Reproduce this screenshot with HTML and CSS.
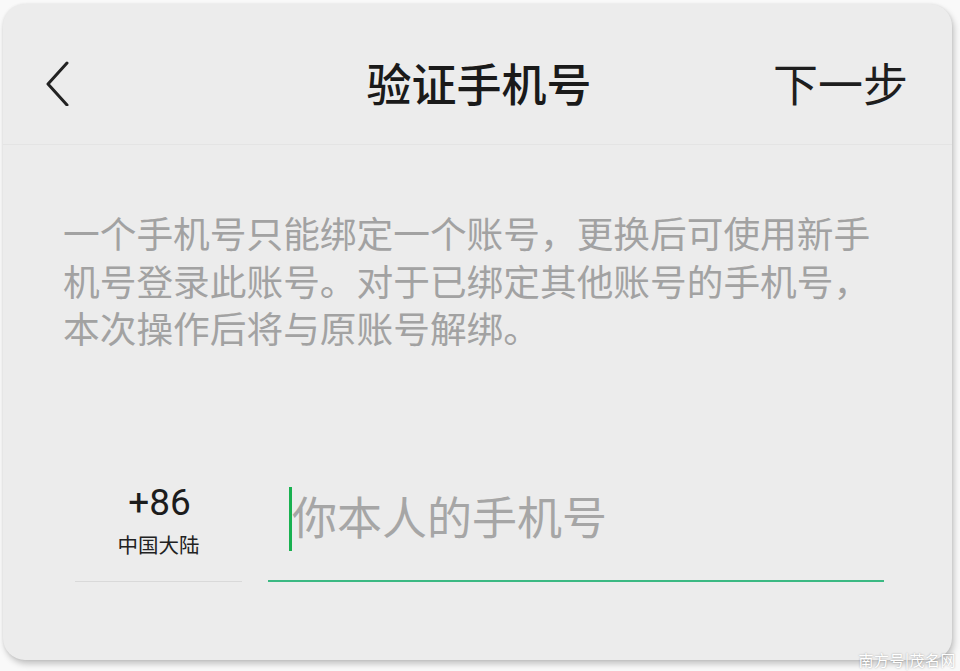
FILE: index.html
```html
<!DOCTYPE html>
<html lang="zh-CN">
<head>
    <meta charset="UTF-8">
    <meta name="viewport" content="width=device-width, initial-scale=1.0">
    <title>验证手机号</title>
    <link rel="stylesheet" href="styles.css">
</head>
<body>
    <div class="card">
        <!-- Top bar -->
        <div class="header">
            <a class="back" href="#">
                <svg width="26" height="46" viewBox="0 0 26 46">
                    <path d="M21 3 L2 24 L21 45" fill="none" stroke="#222" stroke-width="3" stroke-linecap="round" stroke-linejoin="round"/>
                </svg>
            </a>
            <h1 class="title">验证手机号</h1>
            <a class="next" href="#">下一步</a>
        </div>

        <!-- Notice -->
        <p class="notice">一个手机号只能绑定一个账号，更换后可使用新手<br>机号登录此账号。对于已绑定其他账号的手机号，<br>本次操作后将与原账号解绑。</p>

        <!-- Phone number -->
        <div class="phone-row">
            <div class="region">
                <div class="code">+86</div>
                <div class="region-name">中国大陆</div>
            </div>
            <div class="phone-input">
                <span class="cursor"></span>
                <input type="tel" placeholder="你本人的手机号">
            </div>
        </div>
    </div>

    <div class="watermark">南方号|茂名网</div>
</body>
</html>
```

FILE: styles.css
```css
* {
    box-sizing: border-box;
    margin: 0;
    padding: 0;
}
body {
    font-family: "Noto Sans CJK SC", "Noto Sans", sans-serif;
    background-color: #f9f9f9;
    width: 960px;
    height: 671px;
    overflow: hidden;
    position: relative;
}
.card {
    margin: 4px 8px 0 3px;
    height: 656px;
    background-color: #ececec;
    border-radius: 22px;
    box-shadow: 2px 4px 6px rgba(0, 0, 0, 0.22), 0 0 3px rgba(0, 0, 0, 0.08);
}
.header {
    height: 141px;
    padding: 17px 44px 0 43px;
    display: grid;
    grid-template-columns: 1fr auto 1fr;
    align-items: center;
    border-bottom: 1px solid #e4e4e4;
}
.back {
    display: flex;
    align-items: center;
}
.title {
    font-size: 45px;
    font-weight: 500;
    color: #1a1a1a;
    line-height: 1;
    padding-left: 4px;
}
.next {
    justify-self: end;
    font-size: 45px;
    color: #1e1e1e;
    text-decoration: none;
    line-height: 1;
}
.notice {
    margin: 64px 40px 0 60px;
    font-size: 36.7px;
    line-height: 47.5px;
    color: #a2a2a2;
    white-space: nowrap;
}
.phone-row {
    display: flex;
    align-items: flex-end;
    margin: 131px 68px 0 72px;
    gap: 26px;
}
.region {
    width: 167px;
    text-align: center;
    padding-bottom: 24px;
    border-bottom: 1px solid #d9d9d9;
}
.code {
    font-family: Roboto, "Noto Sans", sans-serif;
    font-size: 37px;
    line-height: 40px;
    color: #1c1c1c;
    padding-left: 2px;
}
.region-name {
    margin-top: 8px;
    font-size: 20.5px;
    line-height: 26px;
    color: #222;
}
.phone-input {
    flex: 1;
    display: flex;
    align-items: center;
    height: 98px;
    padding: 0 0 32px 21px;
    border-bottom: 2px solid #3bb983;
}
.cursor {
    width: 3px;
    height: 64px;
    background-color: #19b150;
    margin-top: 6px;
}
.phone-input input {
    flex: 1;
    border: none;
    outline: none;
    background: transparent;
    font-family: "Noto Sans CJK SC", sans-serif;
    font-size: 45px;
    color: #333;
    padding-left: 0;
}
.phone-input input::placeholder {
    color: #a6a6a6;
}
.watermark {
    position: absolute;
    right: 4px;
    bottom: 1px;
    font-family: "Noto Sans CJK SC", serif;
    font-size: 15px;
    letter-spacing: 0.5px;
    color: #fff;
    text-shadow: 0 0 2px rgba(0, 0, 0, 0.35);
}
```
